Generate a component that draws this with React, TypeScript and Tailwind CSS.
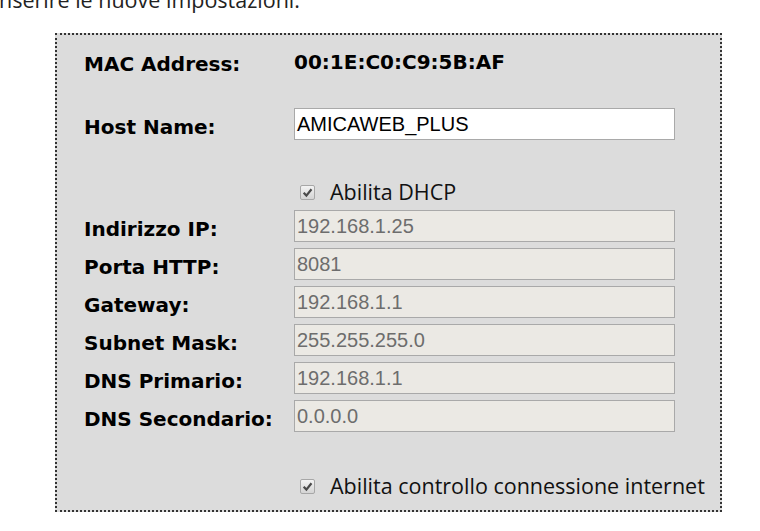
const labelFont = { fontFamily: '"DejaVu Sans", Verdana, sans-serif' };

function Check() {
  return (
    <span className="flex h-[15px] w-[15px] shrink-0 items-center justify-center rounded-[2px] border border-[#a7a7a7] bg-gradient-to-b from-[#f4f4f4] to-[#d4d4d4]">
      <svg width="11" height="11" viewBox="0 0 10 10">
        <path d="M1.5 5.2 L4 7.8 L8.6 2" fill="none" stroke="#4a4a4a" strokeWidth="2" />
      </svg>
    </span>
  );
}

function Row({ label, value }: { label: string; value: string }) {
  return (
    <div className="flex h-[32px] items-center">
      <div className="w-[210px] pt-[6px] text-[20px] font-bold text-black" style={labelFont}>
        {label}
      </div>
      <div className="flex h-[32px] w-[381px] items-center border border-[#a9a9a9] bg-[#ebe9e4] px-[2px] text-[20px] text-[#6d6d6d] font-['Liberation_Sans',Arial,sans-serif]">
        {value}
      </div>
    </div>
  );
}

export default function App() {
  const rows = [
    ['Indirizzo IP:', '192.168.1.25'],
    ['Porta HTTP:', '8081'],
    ['Gateway:', '192.168.1.1'],
    ['Subnet Mask:', '255.255.255.0'],
    ['DNS Primario:', '192.168.1.1'],
    ['DNS Secondario:', '0.0.0.0'],
  ];

  return (
    <div className="h-[531px] w-[760px] overflow-hidden bg-white font-['Open_Sans',sans-serif]">
      <div className="-ml-[7px] -mt-[14px] h-[28px] text-[21.5px] leading-[28px] text-[#222]">
        Inserire le nuove impostazioni.
      </div>
      <div className="ml-[55px] mt-[19px] h-[479px] w-[667px] border-2 border-dotted border-[#333] bg-[#dcdcdc] pl-[27px] pt-[13px]">
        <div className="flex h-[32px] items-center">
          <div className="w-[210px] text-[20px] font-bold text-black" style={labelFont}>
            MAC Address:
          </div>
          <div className="-mt-[4px] text-[20px] font-bold text-black" style={labelFont}>
            00:1E:C0:C9:5B:AF
          </div>
        </div>

        <div className="mt-[28px] flex h-[32px] items-center">
          <div className="w-[210px] pt-[6px] text-[20px] font-bold text-black" style={labelFont}>
            Host Name:
          </div>
          <div className="flex h-[32px] w-[381px] items-center border border-[#a9a9a9] bg-white px-[2px] text-[20px] text-black font-['Liberation_Sans',Arial,sans-serif]">
            AMICAWEB_PLUS
          </div>
        </div>

        <div className="mt-[36px] flex h-[32px] items-center pl-[216px]">
          <Check />
          <span className="ml-[15px] text-[21.5px] text-[#111]">Abilita DHCP</span>
        </div>

        <div className="mt-[2px] flex flex-col gap-[6px]">
          {rows.map(([l, v]) => (
            <Row key={l} label={l} value={v} />
          ))}
        </div>

        <div className="mt-[38px] flex h-[32px] items-center pl-[216px]">
          <Check />
          <span className="ml-[15px] text-[21.5px] text-[#111]">Abilita controllo connessione internet</span>
        </div>
      </div>
    </div>
  );
}
